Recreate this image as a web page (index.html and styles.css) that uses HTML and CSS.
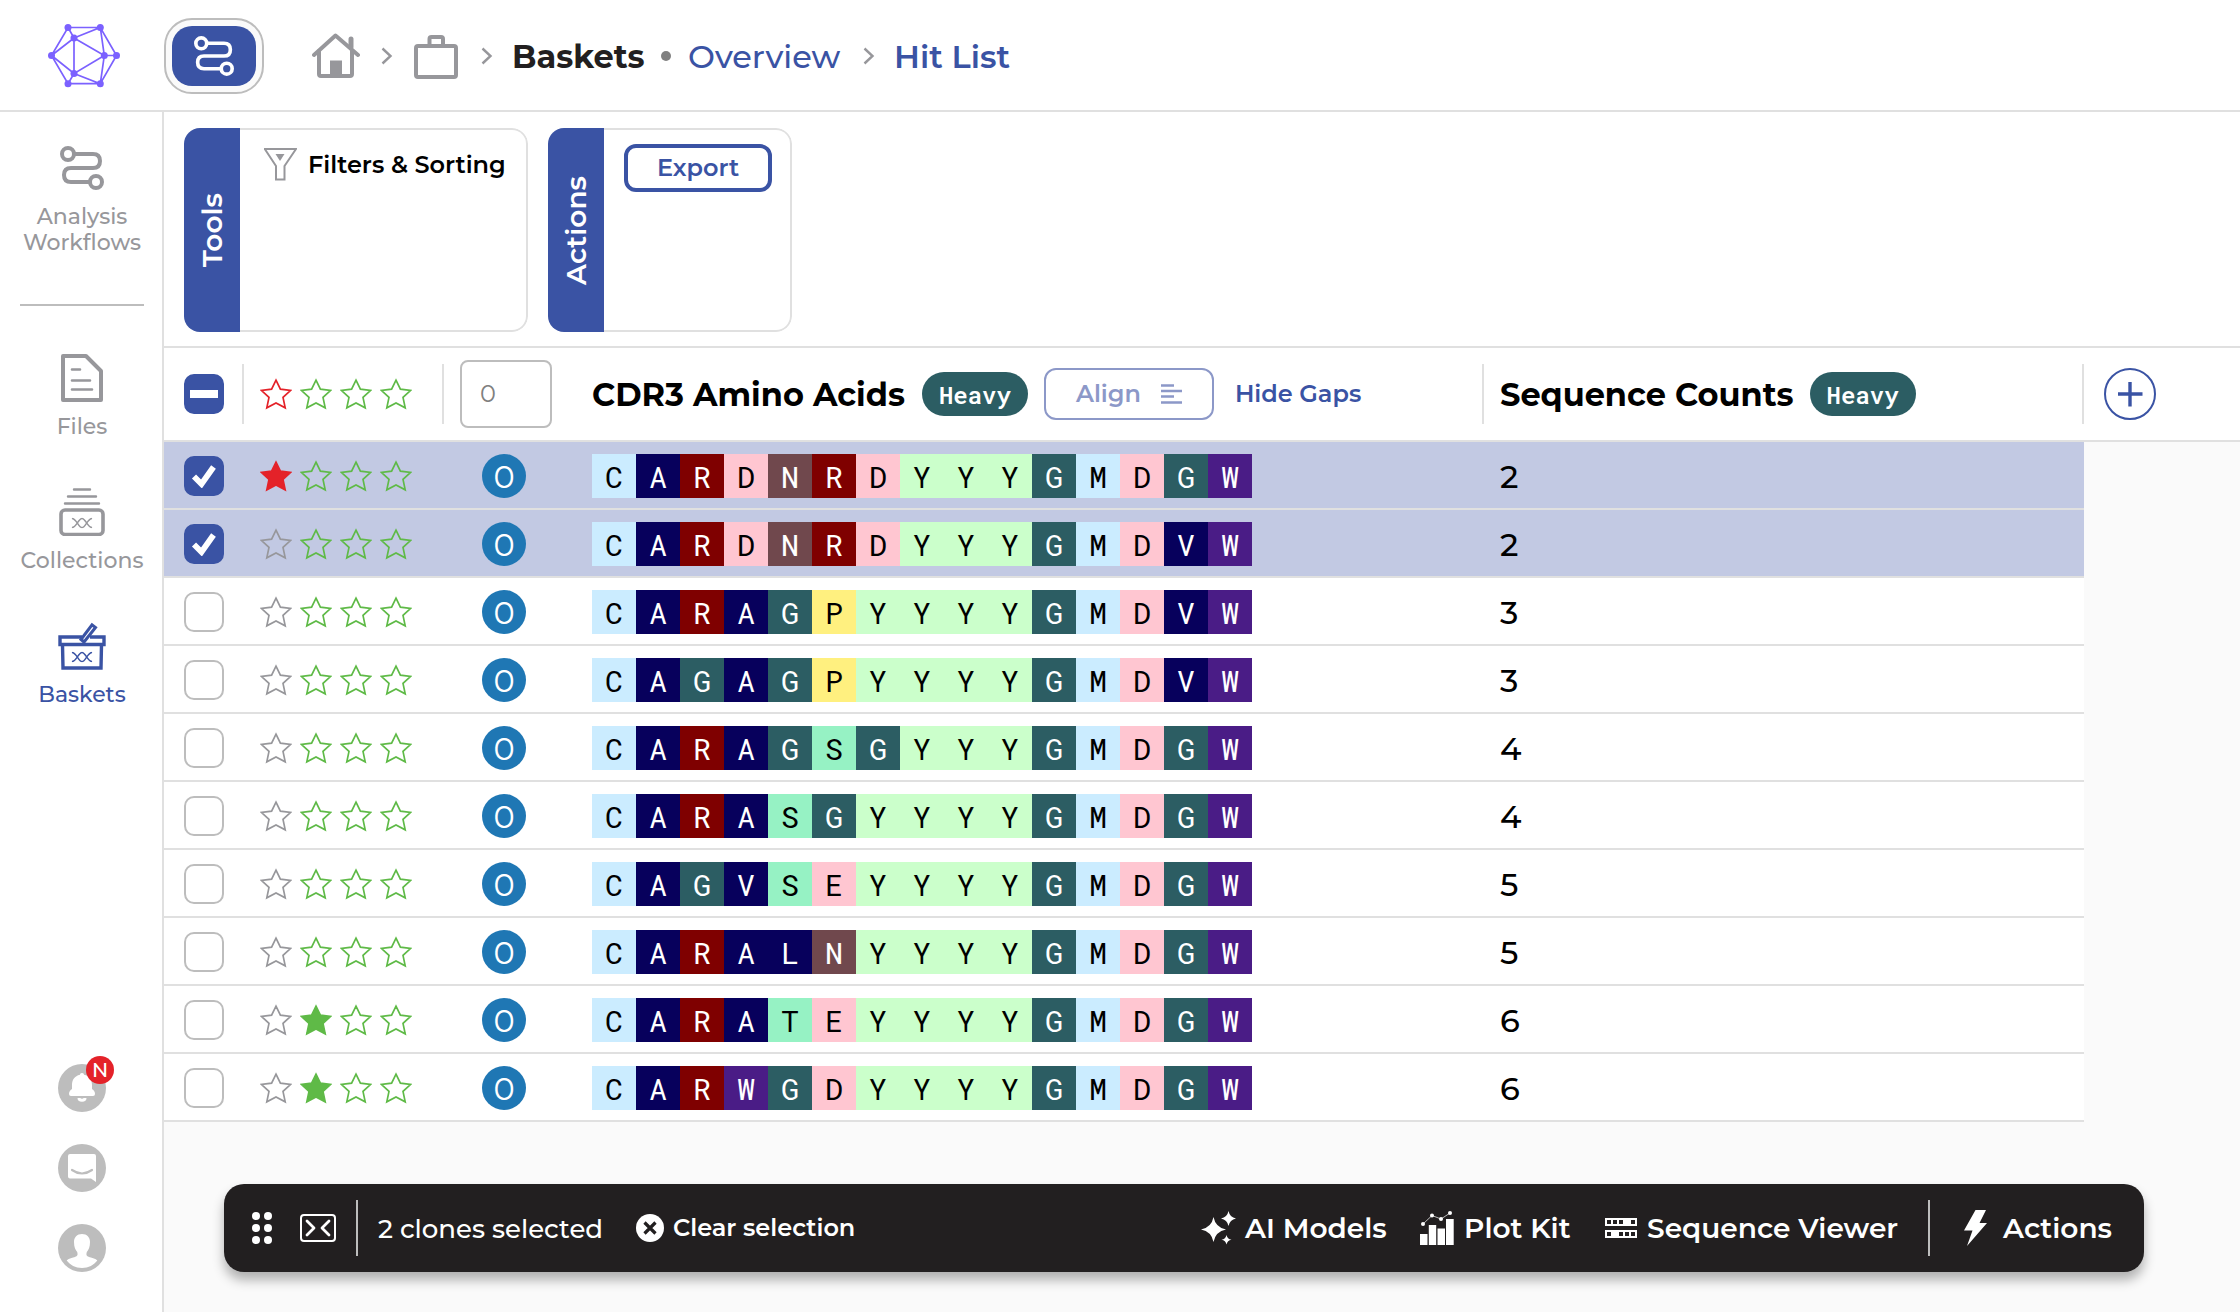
FILE: index.html
```
<!DOCTYPE html>
<html lang="en">
<head>
    <meta charset="UTF-8">
    <meta name="viewport" content="width=device-width, initial-scale=1.0">
    <title>Hit List - Baskets</title>
    <link rel="stylesheet" href="styles.css">
</head>
<body>

    <svg class="sprites" width="0" height="0">
        <symbol id="star" viewBox="0 0 32 32">
            <path d="M16 2.2L20.4 11.2L30.4 12.5L23 19.4L25.2 29.8L16 24.9L6.8 29.8L9 19.4L1.6 12.5L11.6 11.2Z"/>
        </symbol>
        <symbol id="workflow" viewBox="0 0 44 44">
            <g fill="none" stroke="currentColor" stroke-width="4">
                <circle cx="8" cy="8" r="6"/>
                <circle cx="36" cy="36" r="6"/>
                <path d="M14 8H33Q40 8 40 15T33 22H11Q4 22 4 29T11 36H30"/>
            </g>
        </symbol>
        <symbol id="chevron" viewBox="0 0 12 18">
            <path d="M1.5 1.5L9.5 9L1.5 16.5" fill="none" stroke="#97979b" stroke-width="2.4"/>
        </symbol>
        <symbol id="dna" viewBox="0 0 24 12">
            <path d="M1 1C6 1 8 11 12 11S18 1 23 1M1 11C6 11 8 1 12 1S18 11 23 11" fill="none" stroke="currentColor" stroke-width="1.6"/>
        </symbol>
    </svg>

    <header class="topbar">
        <svg class="logo" width="72" height="64" viewBox="0 0 72 64">
            <path d="M20 3.5H52.3L68.5 31.5L52.3 59.7H20L3.5 31.5ZM20 3.5L26 14L52.3 3.5L56.3 31.5H68.5M3.5 31.5L26 14V49.5L3.5 31.5M26 14L56.3 31.5L26 49.5L20 59.7M26 49.5L52.3 59.7L56.3 31.5" fill="none" stroke="#7b61ff" stroke-width="1.7"/>
            <g fill="#7b61ff">
                <circle cx="20" cy="3.5" r="3.5"/><circle cx="52.3" cy="3.5" r="3.5"/>
                <circle cx="26" cy="14" r="3.5"/><circle cx="3.5" cy="31.5" r="3.5"/>
                <circle cx="56.3" cy="31.5" r="3.5"/><circle cx="68.5" cy="31.5" r="3.5"/>
                <circle cx="26" cy="49.5" r="3.5"/><circle cx="20" cy="59.7" r="3.5"/>
                <circle cx="52.3" cy="59.7" r="3.5"/>
            </g>
        </svg>
        <div class="app-switch">
            <div class="app-switch-inner">
                <svg width="40" height="40"><use href="#workflow"/></svg>
            </div>
        </div>
        <nav class="breadcrumb">
            <svg class="home" width="48" height="46" viewBox="0 0 48 46" fill="none" stroke="#97979b" stroke-width="4" stroke-linejoin="round" stroke-linecap="round">
                <path d="M2 22L23.5 2.5L46 22"/>
                <path d="M7 18V41Q7 43 9 43H38Q40 43 40 41V18"/>
                <path d="M39 14V6" stroke-width="5"/>
                <path d="M18 43V27.5H30V43Z" fill="#97979b" stroke="none"/>
            </svg>
            <svg class="chev chev-1" width="12" height="18"><use href="#chevron"/></svg>
            <svg class="case" width="44" height="44" viewBox="0 0 44 44" fill="none" stroke="#97979b" stroke-width="4">
                <rect x="2" y="11" width="40" height="31" rx="2"/>
                <path d="M15.500 10V4Q15.500 2 17.500 2H27Q29 2 29 4V10"/>
            </svg>
            <svg class="chev chev-2" width="12" height="18"><use href="#chevron"/></svg>
            <span class="crumb-title">Baskets</span>
            <span class="dot"></span>
            <a class="crumb-link">Overview</a>
            <svg class="chev chev-3" width="12" height="18"><use href="#chevron"/></svg>
            <a class="crumb-current">Hit List</a>
        </nav>
    </header>

    <div class="layout">
        <aside class="sidebar">
            <a class="side-item side-analysis">
                <svg width="44" height="44"><use href="#workflow"/></svg>
                <span>Analysis</span>
                <span>Workflows</span>
            </a>
            <hr class="side-line">
            <a class="side-item">
                <svg width="48" height="48" viewBox="0 0 48 48" fill="none" stroke="currentColor">
                    <path d="M5 2H28L43 17V46H5Z" stroke-width="4" stroke-linejoin="round"/>
                    <path d="M14 15.500H22M14 26.500H32M14 35.500H34" stroke-width="2.600" stroke-linecap="round"/>
                </svg>
                <span>Files</span>
            </a>
            <a class="side-item">
                <svg width="48" height="48" viewBox="0 0 48 48" fill="none" stroke="currentColor">
                    <path d="M16 1.500H32M10 8.500H38M7 15.500H41" stroke-width="2.400" stroke-linecap="round"/>
                    <rect x="3" y="22" width="42" height="24.500" rx="4" stroke-width="3.600"/>
                    <use href="#dna" x="12" y="29.500" width="24" height="11"/>
                </svg>
                <span>Collections</span>
            </a>
            <a class="side-item active">
                <svg width="48" height="48" viewBox="0 0 48 48" fill="none" stroke="currentColor" stroke-width="3.400">
                    <path d="M24 15H2V22.500H46V15H32"/>
                    <path d="M4.500 23L5 46H43L43.500 23"/>
                    <path d="M23 17.500L34 2.800L37.500 5.500L26 20Z" stroke-width="3"/>
                    <use href="#dna" x="12" y="29.500" width="24" height="11"/>
                </svg>
                <span>Baskets</span>
            </a>
            <div class="side-bottom">
                <div class="round">
                    <svg width="48" height="48" viewBox="0 0 48 48" fill="#fff">
                        <path d="M24 9C25.500 9 26 10 26 10.800C31.500 12 34 16 34 21V25C36 26 37 28 37 30Q37 32 35 32H13Q11 32 11 30C11 28 12 26 14 25V21C14 16 16.500 12 22 10.800C22 10 22.500 9 24 9Z"/>
                        <path d="M21 34Q21 36.300 24 36.300T27 34" fill="none" stroke="#fff" stroke-width="3"/>
                    </svg>
                    <span class="badge">N</span>
                </div>
                <div class="round">
                    <svg width="48" height="48" viewBox="0 0 48 48">
                        <path d="M12 10H36Q38 10 38 12V38L33 34.500H12Q10 34.500 10 32.500V12Q10 10 12 10Z" fill="#fff"/>
                        <path d="M14 26Q24 33 34 26" fill="none" stroke="#bdbdbd" stroke-width="2.200" stroke-linecap="round"/>
                    </svg>
                </div>
                <div class="round">
                    <svg width="48" height="48" viewBox="0 0 48 48" fill="#fff">
                        <path d="M24 10C29 10 32 13.500 32 18C32 23 30.500 26 28.800 28C28 31 28.500 32 31 33C35 34 37.500 34.500 39.300 36.500C36 41 30.500 44 24 44S12 41 8.700 36.500C10.500 34.500 13 34 17 33C19.500 32 20 31 19.200 28C17.500 26 16 23 16 18C16 13.500 19 10 24 10Z"/>
                    </svg>
                </div>
            </div>
        </aside>

        <main class="content">
            <section class="toolbar">
                <div class="panel panel-tools">
                    <div class="panel-tab"><span>Tools</span></div>
                    <div class="panel-body">
                        <svg class="funnel" width="34" height="34" viewBox="0 0 34 34" fill="none" stroke="#97979b" stroke-width="2">
                            <path d="M1 2H33L21.500 19V32.500H13V19L1.800 2"/>
                            <path d="M12.500 7H21.500L17 14Z" fill="#97979b" stroke="none"/>
                        </svg>
                        <span class="filters-label">Filters &amp; Sorting</span>
                    </div>
                </div>
                <div class="panel panel-actions">
                    <div class="panel-tab"><span>Actions</span></div>
                    <div class="panel-body">
                        <button class="export">Export</button>
                    </div>
                </div>
            </section>

            <div class="table-head">
                <div class="cell cell-check"><span class="checkbox checked"><i class="minus"></i></span></div>
                <div class="cell cell-stars bordered">
                    <svg class="star red"><use href="#star"/></svg>
                    <svg class="star green"><use href="#star"/></svg>
                    <svg class="star green"><use href="#star"/></svg>
                    <svg class="star green"><use href="#star"/></svg>
                </div>
                <div class="cell cell-count bordered"><div class="count-input">0</div></div>
                <div class="cell cell-seq">
                    <span class="col-title">CDR3 Amino Acids</span>
                    <span class="chain">Heavy</span>
                    <button class="align">Align
                        <svg width="22" height="20" viewBox="0 0 22 20" stroke="#8c98c8" stroke-width="2.600">
                            <path d="M0 1.500H13M0 7H21M0 12.500H13M0 18.500H21"/>
                        </svg>
                    </button>
                    <a class="hide-gaps">Hide Gaps</a>
                </div>
                <div class="cell cell-number bordered">
                    <span class="col-title">Sequence Counts</span>
                    <span class="chain">Heavy</span>
                </div>
                <div class="cell cell-add bordered">
                    <svg width="52" height="52" viewBox="0 0 52 52" fill="none" stroke="#3a53a4">
                        <circle cx="26" cy="26" r="25" stroke-width="2"/>
                        <path d="M26 14V38.500M14 26H38.500" stroke-width="3.400"/>
                    </svg>
                </div>
            </div>

            <div class="table-body" id="rows"></div>
        </main>
    </div>

    <div class="selection-bar">
        <svg class="grip" width="22" height="32" viewBox="0 0 22 32" fill="#fff">
            <circle cx="5" cy="4" r="4"/><circle cx="17" cy="4" r="4"/>
            <circle cx="5" cy="16" r="4"/><circle cx="17" cy="16" r="4"/>
            <circle cx="5" cy="28" r="4"/><circle cx="17" cy="28" r="4"/>
        </svg>
        <svg class="collapse" width="36" height="28" viewBox="0 0 36 28" fill="none" stroke="#fff">
            <rect x="1" y="1" width="34" height="26" rx="3" stroke-width="2"/>
            <path d="M7 7L14 14L7 21M29 7L22 14L29 21" stroke-width="2.800" stroke-linecap="round" stroke-linejoin="round"/>
        </svg>
        <span class="bar-line"></span>
        <span class="bar-count">2 clones selected</span>
        <svg class="clear-icon" width="28" height="28" viewBox="0 0 28 28">
            <circle cx="14" cy="14" r="14" fill="#fff"/>
            <path d="M8.500 8.500L19.500 19.500M19.500 8.500L8.500 19.500" stroke="#221f20" stroke-width="3.200"/>
        </svg>
        <span class="bar-clear">Clear selection</span>

        <div class="bar-right">
            <svg class="ai-icon" width="36" height="34" viewBox="0 0 36 34" fill="#fff">
                <path d="M12.500 6Q14.500 16.500 25 18.500Q14.500 20.500 12.500 31Q10.500 20.500 0 18.500Q10.500 16.500 12.500 6Z"/>
                <path d="M27.500 0Q28.800 6.300 35 7.500Q28.800 8.700 27.500 15Q26.200 8.700 20 7.500Q26.200 6.300 27.500 0Z"/>
                <path d="M25.500 24Q26.300 28 30.500 28.800Q26.300 29.500 25.500 33.500Q24.700 29.500 20.500 28.800Q24.700 28 25.500 24Z"/>
            </svg>
            <span class="ai-label">AI Models</span>
            <svg class="plot-icon" width="34" height="34" viewBox="0 0 34 34" fill="#fff">
                <path d="M0 23H7.500V34H0ZM8.800 14H16.200V34H8.800ZM17.500 17.500H25V34H17.500ZM26 8H33.700V34H26Z"/>
                <path d="M3 13L12 4.500L21 8L30 2" fill="none" stroke="#fff" stroke-width=".7"/>
                <circle cx="3" cy="13" r="2"/><circle cx="12" cy="4.500" r="2"/>
                <circle cx="21" cy="8" r="2"/><circle cx="30" cy="2" r="2"/>
            </svg>
            <span class="plot-label">Plot Kit</span>
            <svg class="viewer-icon" width="32" height="20" viewBox="0 0 32 20">
                <path d="M0 0H32V8H0ZM0 12H32V20H0Z" fill="#fff"/>
                <path d="M2 2H6V6H2ZM8 2H12V6H8ZM14 2H18V6H14ZM26 2H30V6H26ZM2 14H6V18H2ZM14 14H18V18H14ZM20 14H24V18H20ZM26 14H30V18H26Z" fill="#221f20"/>
            </svg>
            <span class="viewer-label">Sequence Viewer</span>
            <span class="bar-line"></span>
            <svg class="bolt" width="24" height="36" viewBox="0 0 24 36" fill="#fff">
                <path d="M11.500 0H22L15.500 13H23L3 36L8.500 20.500H0Z"/>
            </svg>
            <span class="actions-label">Actions</span>
        </div>
    </div>

    <script src="script.js"></script>
</body>
</html>
```
FILE: styles.css
```
* {
    box-sizing: border-box;
}

body {
    margin: 0;
    height: 1312px;
    overflow: hidden;
    display: flex;
    flex-direction: column;
    font-family: "Montserrat", "Inter", sans-serif;
    color: #000;
    background-color: #fff;
    white-space: nowrap;
}

svg {
    display: block;
    flex: none;
}

button {
    font-family: inherit;
    background: none;
    margin: 0;
}

.sprites {
    position: absolute;
}

/* Top bar */
.topbar {
    height: 112px;
    flex: none;
    display: flex;
    align-items: center;
    padding: 2px 0 0 48px;
    border-bottom: 2px solid #e0e0e0;
}

.app-switch {
    width: 100px;
    height: 76px;
    margin-left: 44px;
    padding: 6px;
    border: 2px solid #bdbdbd;
    border-radius: 28px;
    background-color: #fafafa;
}

.app-switch-inner {
    height: 60px;
    display: flex;
    align-items: center;
    justify-content: center;
    border-radius: 20px;
    background-color: #3a53a4;
    color: #fff;
}

.breadcrumb {
    display: flex;
    align-items: center;
    margin-left: 48px;
    font-size: 32px;
    line-height: 40px;
}

.breadcrumb span,
.breadcrumb a {
    flex: none;
}

.case { margin-top: 2px; }
.chev-1 { margin: 0 21px 0 21px; }
.chev-2 { margin: 0 19px 0 23px; }
.chev-3 { margin: 0 19px 0 20px; }

.crumb-title {
    width: 149px;
    padding-top: 1px;
    font-weight: 700;
    color: #221f20;
}

.dot {
    width: 10px;
    height: 10px;
    border-radius: 50%;
    background-color: #808080;
}

.crumb-link {
    width: 155px;
    margin-left: 17px;
    padding-top: 1px;
    font-weight: 500;
    color: #3a53a4;
}

.crumb-current {
    padding-top: 1px;
    font-weight: 600;
    color: #3a53a4;
}

/* Sidebar */
.layout {
    flex: 1;
    display: flex;
    min-height: 0;
}

.sidebar {
    width: 164px;
    flex: none;
    display: flex;
    flex-direction: column;
    align-items: center;
    padding: 34px 0 0 2px;
    border-right: 2px solid #e0e0e0;
}

.side-item {
    display: flex;
    flex-direction: column;
    align-items: center;
    height: 134px;
    font-size: 22px;
    font-weight: 500;
    line-height: 26px;
    color: #97979b;
}

.side-item svg {
    margin-bottom: 12px;
}

.side-analysis {
    height: 158px;
}

.side-analysis svg {
    margin-bottom: 14px;
}

.side-item.active {
    color: #3a53a4;
}

.side-line {
    width: 124px;
    height: 2px;
    margin: 0 0 48px;
    border: 0;
    background-color: #bdbdbd;
}

.side-bottom {
    display: flex;
    flex-direction: column;
    gap: 32px;
    margin: auto 0 40px;
}

.round {
    position: relative;
    width: 48px;
    height: 48px;
    border-radius: 50%;
    background-color: #bdbdbd;
}

.badge {
    position: absolute;
    top: -8px;
    right: -8px;
    width: 28px;
    height: 28px;
    border-radius: 50%;
    background-color: #e42229;
    color: #fff;
    font-size: 20px;
    font-weight: 500;
    line-height: 29px;
    text-align: center;
}

/* Toolbar */
.content {
    flex: 1;
    background-color: #fafafa;
}

.toolbar {
    display: flex;
    gap: 20px;
    height: 236px;
    padding: 16px 20px;
    border-bottom: 2px solid #e0e0e0;
    background-color: #fff;
}

.panel {
    display: flex;
    height: 204px;
    border-radius: 16px;
    overflow: hidden;
}

.panel-tools { width: 344px; }
.panel-actions { width: 244px; }

.panel-tab {
    width: 56px;
    flex: none;
    display: flex;
    align-items: center;
    justify-content: center;
    background-color: #3a53a4;
    color: #fff;
    font-size: 28px;
    font-weight: 600;
}

.panel-tab span {
    writing-mode: vertical-rl;
    transform: rotate(180deg);
}

.panel-body {
    flex: 1;
    display: flex;
    align-items: flex-start;
    border: 2px solid #e0e0e0;
    border-left: 0;
    border-radius: 0 16px 16px 0;
}

.funnel {
    margin: 17px 0 0 23px;
}

.filters-label {
    margin: 17px 0 0 11px;
    font-size: 24px;
    font-weight: 600;
    line-height: 36px;
}

.export {
    width: 148px;
    height: 48px;
    margin: 14px 0 0 20px;
    padding: 0 0 1px;
    border: 4px solid #3a53a4;
    border-radius: 12px;
    font-size: 24px;
    font-weight: 600;
    color: #3a53a4;
}

/* Table */
.table-head {
    display: flex;
    align-items: center;
    height: 94px;
    padding-left: 20px;
    border-bottom: 2px solid #e0e0e0;
    background-color: #fff;
}

.cell {
    display: flex;
    align-items: center;
    flex: none;
}

.table-head .cell {
    height: 60px;
}

.table-head .bordered {
    border-left: 2px solid #e0e0e0;
}

.cell-check { width: 58px; }
.cell-stars { width: 200px; padding-left: 16px; gap: 8px; }
.cell-count { width: 150px; }
.cell-seq { width: 890px; }
.cell-number { width: 600px; padding-left: 16px; }
.cell-add { padding-left: 20px; }

.row .cell-stars,
.row .cell-number {
    padding-left: 18px;
}

.checkbox {
    width: 40px;
    height: 40px;
    display: flex;
    align-items: center;
    justify-content: center;
    border: 2px solid #bdbdbd;
    border-radius: 10px;
    background-color: #fff;
}

.checkbox.checked {
    border-color: #3a53a4;
    background-color: #3a53a4;
}

.minus {
    width: 28px;
    height: 8px;
    background-color: #fff;
}

.star {
    width: 32px;
    height: 32px;
    fill: none;
    stroke-width: 1.7;
}

.star.gray { stroke: #97979b; }
.star.green { stroke: #5fba47; }
.star.red { stroke: #e42229; }
.star.filled.green { fill: #5fba47; }
.star.filled.red { fill: #e42229; }

.count-input {
    width: 92px;
    height: 68px;
    flex: none;
    margin-left: 16px;
    padding-left: 18px;
    border: 2px solid #bdbdbd;
    border-radius: 8px;
    font-size: 24px;
    font-weight: 400;
    line-height: 63px;
    color: #808080;
}

.col-title {
    padding-top: 1px;
    font-size: 32px;
    font-weight: 700;
}

.chain {
    height: 44px;
    margin-left: 16px;
    padding: 0 17px;
    border-radius: 22px;
    background-color: #2c5d63;
    color: #fff;
    font-family: "Roboto Mono", "Roboto", monospace;
    font-size: 24px;
    font-weight: 600;
    line-height: 46px;
}

.cell-seq .chain {
    margin-left: 17px;
}

.align {
    display: flex;
    align-items: center;
    gap: 20px;
    width: 170px;
    height: 52px;
    margin-left: 16px;
    padding: 0 0 1px 30px;
    border: 2px solid #8c98c8;
    border-radius: 12px;
    font-size: 24px;
    font-weight: 600;
    color: #8c98c8;
}

.hide-gaps {
    margin: -1px 0 0 21px;
    font-size: 24px;
    font-weight: 600;
    color: #3a53a4;
}

.table-body {
    width: 1920px;
}

.row {
    display: flex;
    align-items: center;
    height: 68px;
    padding: 2px 0 0 20px;
    border-bottom: 2px solid #e0e0e0;
    background-color: #fff;
}

.row.selected {
    background-color: #c2c9e3;
}

.row .cell-number {
    padding-top: 1px;
    font-size: 32px;
    font-weight: 500;
}

.bubble {
    width: 44px;
    height: 44px;
    margin-left: 40px;
    border-radius: 50%;
    background-color: #1f77b4;
    color: #fff;
    font-size: 32px;
    line-height: 46px;
    text-align: center;
}

.aa {
    width: 44px;
    height: 44px;
    font-family: "Roboto Mono", "Roboto", monospace;
    font-size: 30px;
    line-height: 45px;
    text-align: center;
    color: #000;
}

.aa-C, .aa-M { background-color: #cbecff; }
.aa-A, .aa-V, .aa-L { background-color: #07005c; color: #fff; }
.aa-R { background-color: #7f0000; color: #fff; }
.aa-D, .aa-E { background-color: #ffc6d1; }
.aa-N { background-color: #70484d; color: #fff; }
.aa-Y { background-color: #cbffcb; }
.aa-G { background-color: #2c5d63; color: #fff; }
.aa-W { background-color: #4a1c86; color: #fff; }
.aa-P { background-color: #fff07f; }
.aa-S, .aa-T { background-color: #96f2c4; }

/* Selection bar floats over the page */
.selection-bar {
    position: absolute;
    left: 224px;
    right: 96px;
    bottom: 40px;
    height: 88px;
    display: flex;
    align-items: center;
    padding: 0 32px 0 27px;
    border-radius: 20px;
    background-color: #221f20;
    box-shadow: 0 8px 12px rgba(0, 0, 0, .3);
    color: #fff;
    font-size: 28px;
    font-weight: 600;
}

.bar-line {
    width: 2px;
    height: 56px;
    background-color: #bdbdbd;
}

.collapse { margin: 0 20px 0 27px; }

.bar-count {
    width: 258px;
    margin-left: 20px;
    padding-top: 1px;
    font-size: 26px;
    font-weight: 500;
}

.bar-clear {
    margin: -1px 0 0 9px;
    font-size: 24px;
}

.bar-right {
    display: flex;
    align-items: center;
    margin-left: auto;
}

.ai-label { width: 175px; margin-left: 8px; }
.plot-label { width: 141px; margin-left: 10px; }
.viewer-label { width: 281px; margin-left: 10px; }
.bolt { margin: 0 15px 0 34px; }
```
FILE: script.js
```
// stars: index of the filled star, -1 when the clone is not rated
const clones = [
    { seq: "CARDNRDYYYGMDGW", count: 2, stars: 0, selected: true },
    { seq: "CARDNRDYYYGMDVW", count: 2, stars: -1, selected: true },
    { seq: "CARAGPYYYYGMDVW", count: 3, stars: -1 },
    { seq: "CAGAGPYYYYGMDVW", count: 3, stars: -1 },
    { seq: "CARAGSGYYYGMDGW", count: 4, stars: -1 },
    { seq: "CARASGYYYYGMDGW", count: 4, stars: -1 },
    { seq: "CAGVSEYYYYGMDGW", count: 5, stars: -1 },
    { seq: "CARALNYYYYGMDGW", count: 5, stars: -1 },
    { seq: "CARATEYYYYGMDGW", count: 6, stars: 1 },
    { seq: "CARWGDYYYYGMDGW", count: 6, stars: 1 }
];

const checkIcon = `<svg width="26" height="24" viewBox="0 0 26 24"><path d="M3 12.500L10.500 20L22.500 3" fill="none" stroke="#fff" stroke-width="5.800"/></svg>`;

function starIcon(i, filled) {
    let color = "green";
    if (i === 0) color = filled === 0 ? "red" : "gray";
    return `<svg class="star ${color} ${i === filled ? "filled" : ""}"><use href="#star"/></svg>`;
}

document.getElementById("rows").innerHTML = clones.map(c => `
    <div class="row ${c.selected ? "selected" : ""}">
        <div class="cell cell-check">
            <span class="checkbox ${c.selected ? "checked" : ""}">${c.selected ? checkIcon : ""}</span>
        </div>
        <div class="cell cell-stars">${[0, 1, 2, 3].map(i => starIcon(i, c.stars)).join("")}</div>
        <div class="cell cell-count"><div class="bubble">0</div></div>
        <div class="cell cell-seq">${[...c.seq].map(a => `<div class="aa aa-${a}">${a}</div>`).join("")}</div>
        <div class="cell cell-number">${c.count}</div>
    </div>`).join("");
```
